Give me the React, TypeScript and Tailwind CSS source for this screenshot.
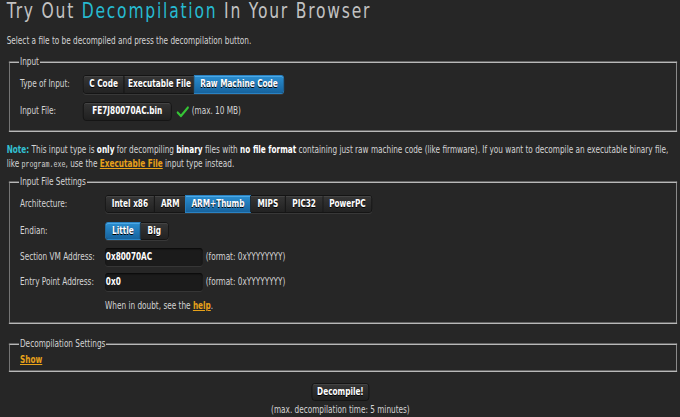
import type { ReactNode } from "react";

// The page is laid out on a 920px-wide sheet and squeezed horizontally to 680px,
// which is how the reference was captured.
const body = "[font-family:'DejaVu_Sans_Condensed','DejaVu_Sans',sans-serif]";
const link = "font-bold text-[#e8a21a] underline";

type SegProps = { items: { label: string; w: string }[]; active: string; h?: string };

function Segmented({ items, active, h = "h-[18px]" }: SegProps) {
  return (
    <div className={`flex ${h} rounded-[4px] border border-[#121212] bg-[#1c1c1c] shadow-[0_1px_0_#383838]`}>
      {items.map((item, i) => {
        const on = item.label === active;
        const first = i === 0 ? "rounded-l-[3px]" : "";
        const last = i === items.length - 1 ? "rounded-r-[3px]" : "";
        return (
          <button
            key={item.label}
            className={`${item.w} ${first} ${last} flex h-full items-center justify-center whitespace-nowrap text-[11px] font-bold text-white [text-shadow:0_1px_0_#000] ${
              on
                ? "bg-gradient-to-b from-[#2b8ed0] to-[#16639e] shadow-[inset_0_1px_0_#4aa8e6,0_0_0_1px_#2a82c2]"
                : `bg-gradient-to-b from-[#363636] to-[#222222] shadow-[inset_0_1px_0_#444] ${i > 0 ? "border-l border-[#151515]" : ""}`
            }`}
          >
            {item.label}
          </button>
        );
      })}
    </div>
  );
}

function Row({ label, labelW, children, className = "" }: { label: string; labelW: string; children: ReactNode; className?: string }) {
  return (
    <div className={`flex items-center ${className}`}>
      <span className={`${labelW} shrink-0 whitespace-nowrap text-[11px] text-[#d4d4d4]`}>{label}</span>
      {children}
    </div>
  );
}

function Box({ legend, children, className = "" }: { legend: string; children: ReactNode; className?: string }) {
  return (
    <fieldset className={`ml-[12px] mr-[5px] border-2 border-[#b8b8b8] [border-style:groove] pl-[13px] ${className}`}>
      <legend className="-ml-[1px] px-[1px] text-[11px] leading-[12px] text-[#d4d4d4]">{legend}</legend>
      {children}
    </fieldset>
  );
}

function AddrInput({ value }: { value: string }) {
  return (
    <div className="flex items-center">
      <div className="flex h-[18px] w-[132px] items-center rounded-[4px] bg-[#1b1b1b] pl-[1px] text-[11px] font-bold text-white shadow-[inset_0_1px_2px_#080808,0_1px_0_#363636]">
        {value}
      </div>
      <span className="ml-[4px] text-[11px] text-[#d4d4d4]">(format: 0xYYYYYYYY)</span>
    </div>
  );
}

export default function App() {
  return (
    <div className="h-[417px] w-[680px] overflow-hidden bg-[#262626]">
      <div className={`w-[920px] origin-top-left scale-x-[0.74] ${body}`}>
        <h1 className="pl-[9px] font-['DejaVu_Sans',sans-serif] text-[21px] leading-[22px] tracking-[2.4px] text-[#c2c2c2]">
          Try Out <span className="text-[#27bbd1]">Decompilation</span> In Your Browser
        </h1>
        <p className="mt-[12px] pl-[9px] text-[11px] leading-[14px] text-[#d4d4d4]">
          Select a file to be decompiled and press the decompilation button.
        </p>

        <Box legend="Input" className="mt-[8px] pb-[9px]">
          <Row label="Type of Input:" labelW="w-[85px]" className="mt-[7px]">
            <Segmented
              h="h-[19px]"
              active="Raw Machine Code"
              items={[
                { label: "C Code", w: "w-[54px]" },
                { label: "Executable File", w: "w-[96px]" },
                { label: "Raw Machine Code", w: "w-[120px]" },
              ]}
            />
          </Row>
          <Row label="Input File:" labelW="w-[85px]" className="mt-[8px]">
            <div className="flex h-[19px] w-[120px] items-center justify-center rounded-[4px] border border-[#121212] bg-gradient-to-b from-[#343434] to-[#202020] text-[11px] font-bold text-white shadow-[inset_0_1px_0_#444]">
              FE7J80070AC.bin
            </div>
            <svg width="18" height="12" viewBox="0 0 18 12" className="ml-[6px]">
              <path d="M2 6.5 L6.5 10 L16 1.5" fill="none" stroke="#35c435" strokeWidth="2.4" strokeLinecap="round" strokeLinejoin="round" />
            </svg>
            <span className="ml-[3px] text-[11px] text-[#d4d4d4]">(max. 10 MB)</span>
          </Row>
        </Box>

        <p className="mt-[11px] px-[9px] text-[11px] leading-[14px] text-[#d4d4d4]">
          <b className="text-[#33c0d2]">Note:</b> This input type is <b className="text-white">only</b> for decompiling{" "}
          <b className="text-white">binary</b> files with <b className="text-white">no file format</b> containing just raw machine
          code (like firmware). If you want to decompile an executable binary file,
          <br />
          like <code className="font-['Liberation_Mono',monospace] text-[9px]">program.exe</code>, use the{" "}
          <a className={link}>Executable File</a> input type instead.
        </p>

        <Box legend="Input File Settings" className="mt-[4px] pb-[9px]">
          <Row label="Architecture:" labelW="w-[115px]" className="mt-[7px]">
            <Segmented
              active="ARM+Thumb"
              items={[
                { label: "Intel x86", w: "w-[65px]" },
                { label: "ARM", w: "w-[43px]" },
                { label: "ARM+Thumb", w: "w-[87px]" },
                { label: "MIPS", w: "w-[47px]" },
                { label: "PIC32", w: "w-[51px]" },
                { label: "PowerPC", w: "w-[66px]" },
              ]}
            />
          </Row>
          <Row label="Endian:" labelW="w-[115px]" className="mt-[9px]">
            <Segmented
              active="Little"
              items={[
                { label: "Little", w: "w-[46px]" },
                { label: "Big", w: "w-[38px]" },
              ]}
            />
          </Row>
          <Row label="Section VM Address:" labelW="w-[115px]" className="mt-[8px]">
            <AddrInput value="0x80070AC" />
          </Row>
          <Row label="Entry Point Address:" labelW="w-[115px]" className="mt-[7px]">
            <AddrInput value="0x0" />
          </Row>
          <p className="mt-[8px] pl-[115px] text-[11px] leading-[14px] text-[#d4d4d4]">
            When in doubt, see the <a className={link}>help</a>.
          </p>
        </Box>

        <Box legend="Decompilation Settings" className="mt-[14px] pb-[3px]">
          <a className={`mt-[3px] block text-[11px] leading-[14px] ${link}`}>Show</a>
        </Box>

        <div className="mt-[11px] flex flex-col items-center">
          <button className="flex h-[18px] w-[78px] items-center justify-center rounded-[4px] border border-[#121212] bg-gradient-to-b from-[#363636] to-[#202020] text-[11px] font-bold text-white shadow-[inset_0_1px_0_#444] [text-shadow:0_1px_0_#000]">
            Decompile!
          </button>
          <p className="mt-[2px] text-[11px] leading-[14px] text-[#d4d4d4]">(max. decompilation time: 5 minutes)</p>
        </div>
      </div>
    </div>
  );
}
